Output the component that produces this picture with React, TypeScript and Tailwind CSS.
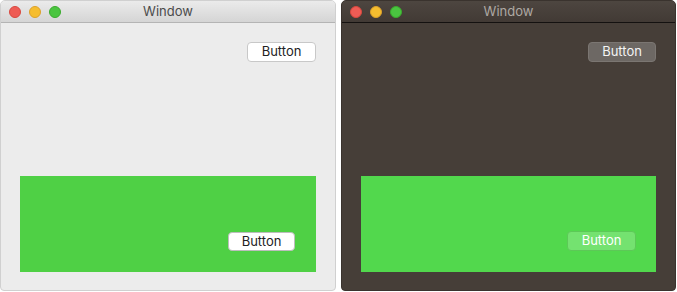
import React from "react";

function Lights() {
  return (
    <div className="absolute left-[8px] top-[5px] flex gap-[8px]">
      <div className="w-[12px] h-[12px] rounded-full bg-[#ee5c55] border border-[#d8483f]" />
      <div className="w-[12px] h-[12px] rounded-full bg-[#f5bd2f] border border-[#dca12a]" />
      <div className="w-[12px] h-[12px] rounded-full bg-[#4ac540] border border-[#3aab2d]" />
    </div>
  );
}

function Win({ dark }: { dark: boolean }) {
  return (
    <div
      className={
        dark
          ? "w-[335px] h-[291px] flex flex-col rounded-t-[5px] rounded-b-[4px] bg-[#463e38] border border-[#3a332e] overflow-hidden"
          : "w-[336px] h-[291px] flex flex-col rounded-t-[5px] rounded-b-[4px] bg-[#ececec] border border-[#d0d0d0] overflow-hidden"
      }
    >
      <div
        className={
          dark
            ? "relative h-[22px] shrink-0 flex items-center justify-center bg-gradient-to-b from-[#4d4640] to-[#423a35] border-b border-[#141110]"
            : "relative h-[22px] shrink-0 flex items-center justify-center bg-gradient-to-b from-[#ebebeb] to-[#d5d5d5] border-b border-[#b4b4b4]"
        }
      >
        <Lights />
        <span className={dark ? "text-[13px] text-[#aea9a4]" : "text-[13px] text-[#4b4b4b]"}>Window</span>
      </div>
      <div className="flex-1 flex flex-col justify-between pt-[19px] pb-[18px] px-[19px]">
        <div className="flex justify-end">
          <div
            className={
              dark
                ? "w-[68px] h-[20px] rounded-[4px] bg-[#6d6864] border border-[#7b7672] text-[#f4f4f4] text-[13px] flex items-center justify-center"
                : "w-[69px] h-[20px] rounded-[4px] bg-white border border-[#c8c8c8] text-[#222] text-[13px] flex items-center justify-center"
            }
          >
            Button
          </div>
        </div>
        <div
          className={
            dark
              ? "h-[96px] bg-[#52d84d] flex items-end justify-end pr-[20px] pb-[21px]"
              : "h-[96px] bg-[#4fd045] flex items-end justify-end pr-[21px] pb-[21px]"
          }
        >
          <div
            className={
              dark
                ? "w-[69px] h-[20px] rounded-[4px] bg-[#74e270] border border-[#5cc957] text-white text-[13px] flex items-center justify-center"
                : "w-[67px] h-[19px] rounded-[4px] bg-white border border-[#bdbdbd] text-[#222] text-[13px] flex items-center justify-center"
            }
          >
            Button
          </div>
        </div>
      </div>
    </div>
  );
}

export default function App() {
  return (
    <div className="w-[677px] h-[292px] bg-white flex gap-[5px]" style={{ fontFamily: "Inter, 'Liberation Sans', sans-serif" }}>
      <Win dark={false} />
      <Win dark={true} />
    </div>
  );
}
